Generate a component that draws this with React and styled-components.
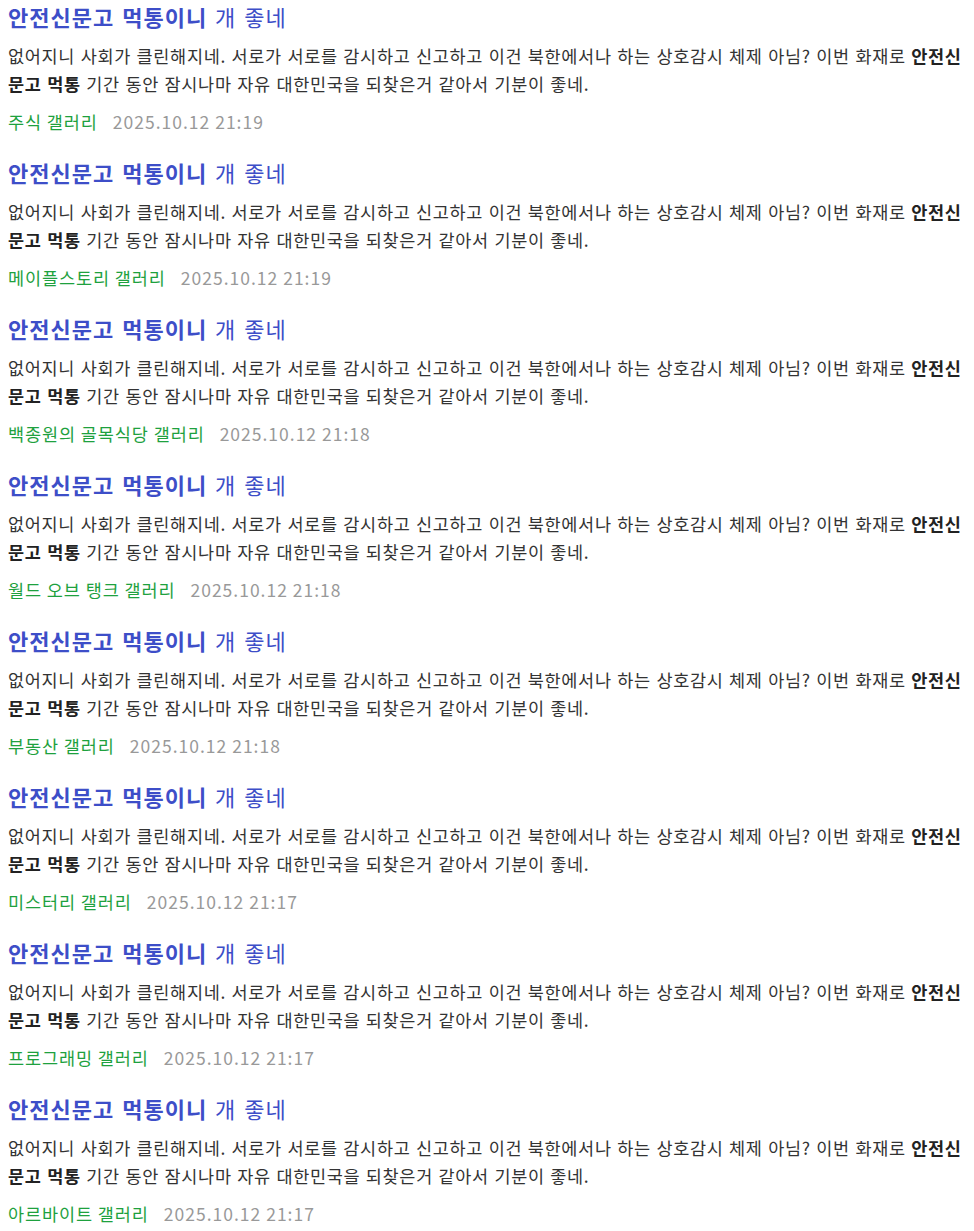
import React from "react";
import styled, { createGlobalStyle } from "styled-components";

const GlobalStyle = createGlobalStyle`
  body {
    margin: 8px;
    background: #ffffff;
    font-family: "Noto Sans CJK KR", "Noto Sans", sans-serif;
  }
`;

const BODY =
  "없어지니 사회가 클린해지네. 서로가 서로를 감시하고 신고하고 이건 북한에서나 하는 상호감시 체제 아님? 이번 화재로 ";
const BODY_END = " 기간 동안 잠시나마 자유 대한민국을 되찾은거 같아서 기분이 좋네.";

const results = [
  { gallery: "주식 갤러리", date: "2025.10.12 21:19" },
  { gallery: "메이플스토리 갤러리", date: "2025.10.12 21:19" },
  { gallery: "백종원의 골목식당 갤러리", date: "2025.10.12 21:18" },
  { gallery: "월드 오브 탱크 갤러리", date: "2025.10.12 21:18" },
  { gallery: "부동산 갤러리", date: "2025.10.12 21:18" },
  { gallery: "미스터리 갤러리", date: "2025.10.12 21:17" },
  { gallery: "프로그래밍 갤러리", date: "2025.10.12 21:17" },
  { gallery: "아르바이트 갤러리", date: "2025.10.12 21:17" },
];

const App = () => {
  return (
    <>
      <GlobalStyle />
      <List>
        {results.map((item, i) => (
          <Item key={i}>
            <Title>
              <strong>안전신문고 먹통이니</strong> 개 좋네
            </Title>
            <Body>
              {BODY}
              <b>안전신문고 먹통</b>
              {BODY_END}
            </Body>
            <Meta>
              <Gallery>{item.gallery}</Gallery>
              <DateText>{item.date}</DateText>
            </Meta>
          </Item>
        ))}
      </List>
    </>
  );
};

const List = styled.ul`
  list-style: none;
  margin: 0;
  padding: 0;
  display: flex;
  flex-direction: column;
  gap: 30px;
`;

const Item = styled.li`
  display: flex;
  flex-direction: column;
`;

const Title = styled.a`
  display: block;
  font-size: 22px;
  line-height: 16px;
  letter-spacing: 1px;
  word-spacing: 2px;
  color: #3d4ec8;
  cursor: pointer;

  strong {
    font-weight: 700;
  }
`;

const Body = styled.p`
  margin: 18px 0 0;
  font-size: 17.5px;
  line-height: 28px;
  letter-spacing: 0.67px;
  word-spacing: 1px;
  color: #333333;

  b {
    font-weight: 700;
    color: #222222;
  }
`;

const Meta = styled.div`
  display: flex;
  gap: 15px;
  margin-top: 12px;
  font-size: 17.5px;
  line-height: 24px;
`;

const Gallery = styled.span`
  color: #1ea13e;
  letter-spacing: 0.9px;
`;

const DateText = styled.span`
  color: #999999;
  letter-spacing: 1px;
`;

export default App;
